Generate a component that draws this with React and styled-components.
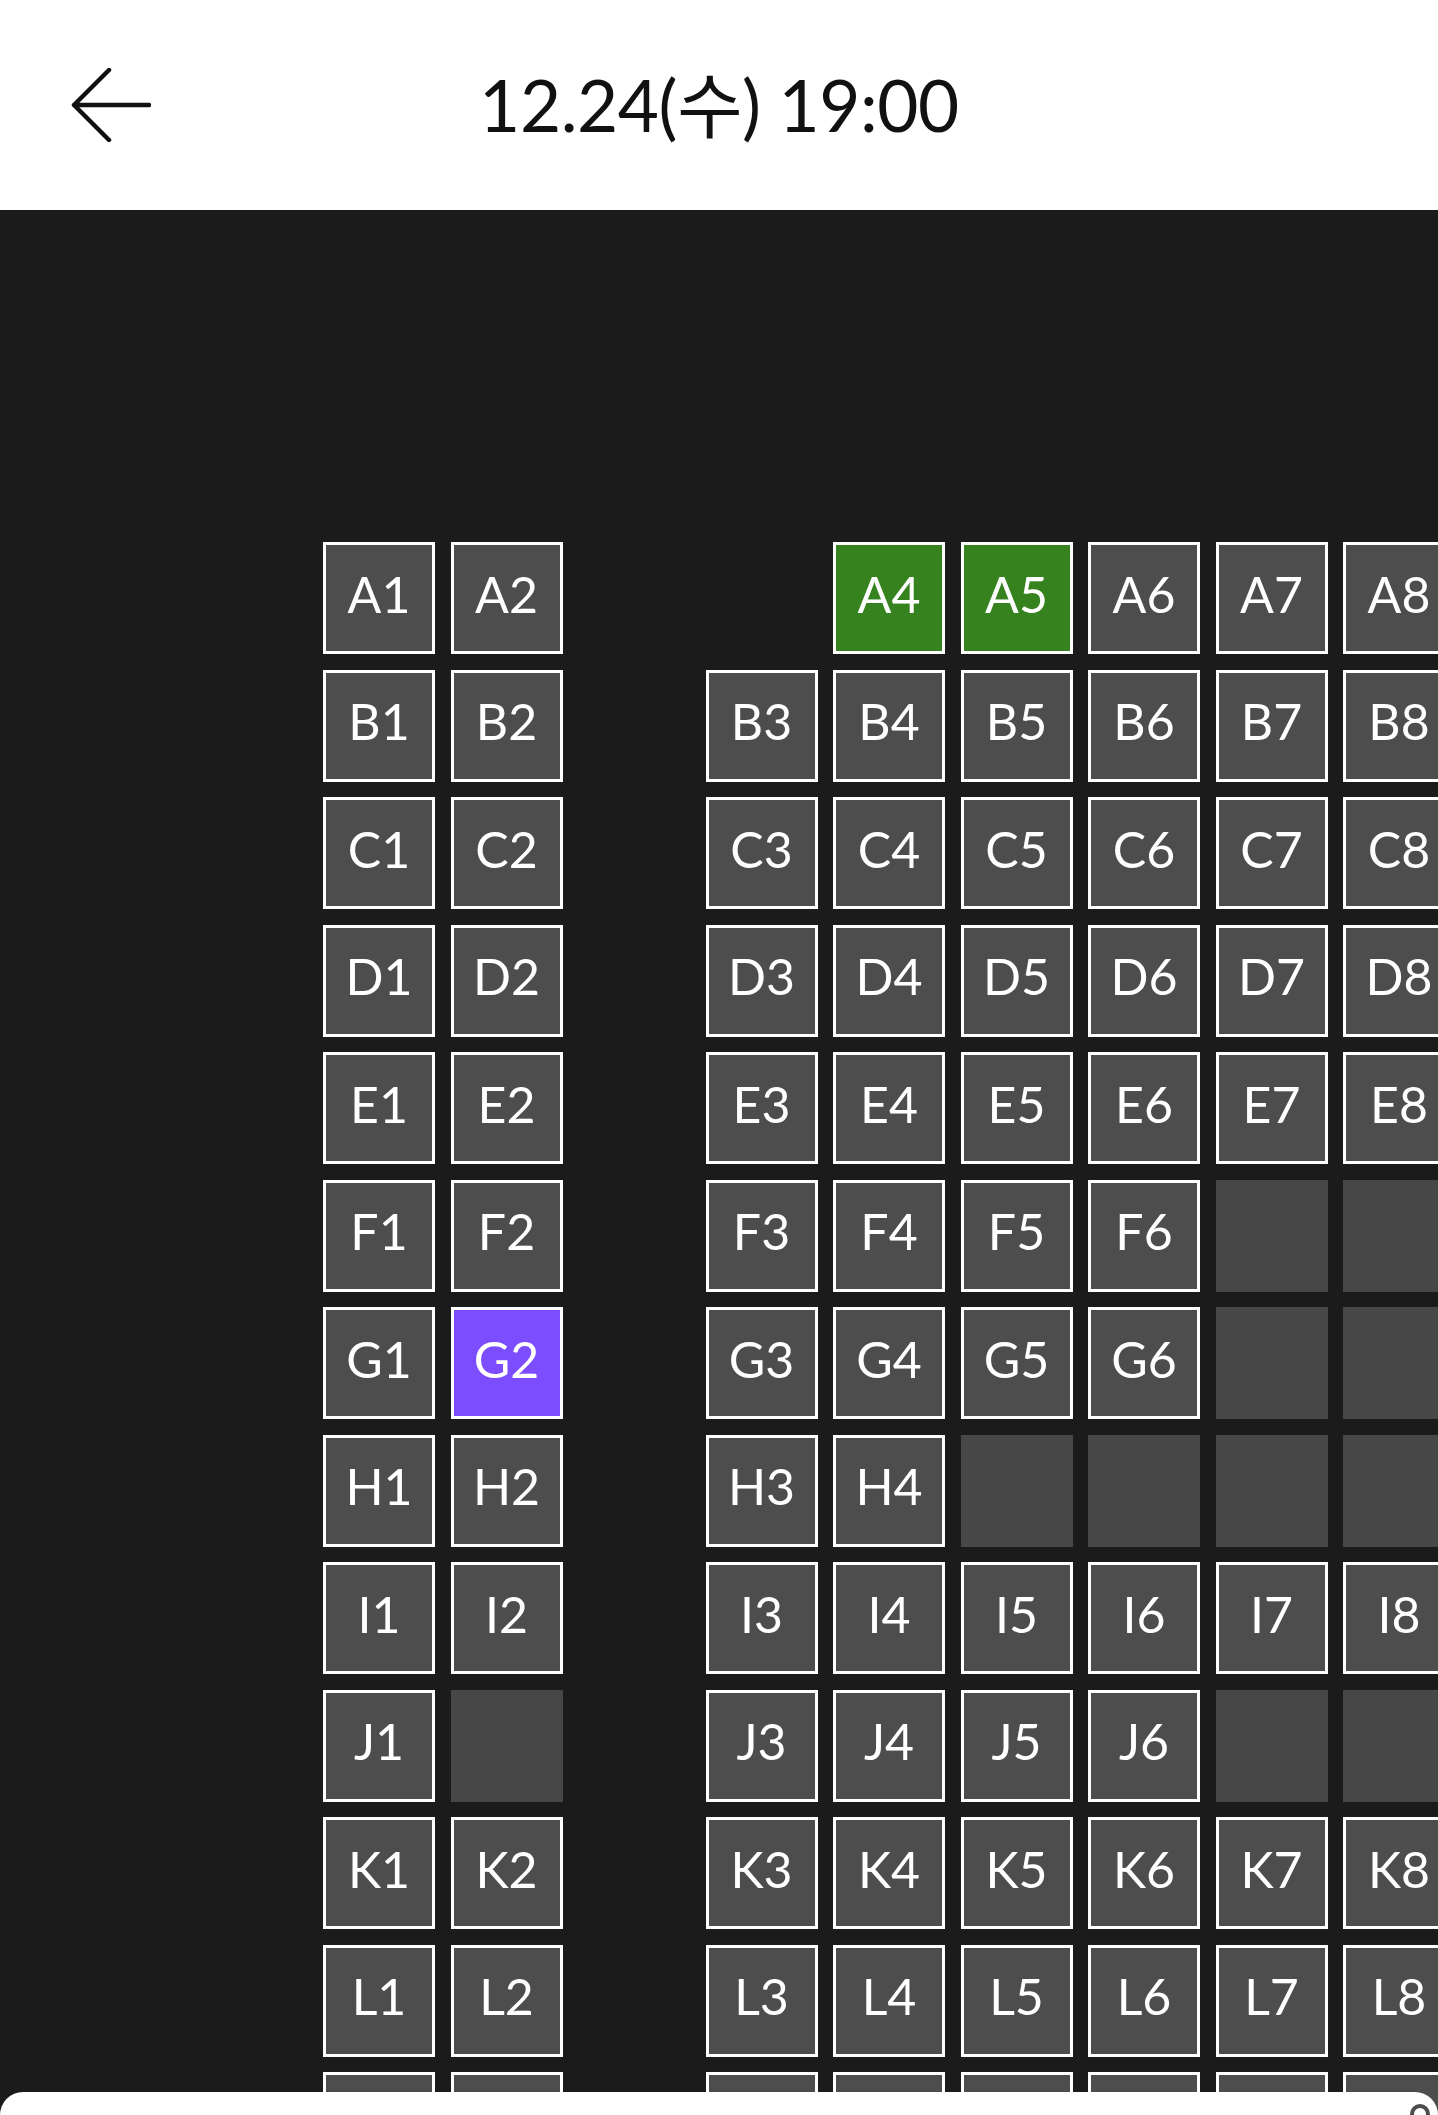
import React from "react";
import styled, { createGlobalStyle } from "styled-components";

const GlobalStyle = createGlobalStyle`
  html, body {
    margin: 0;
    padding: 0;
    background: #1b1b1b;
    overflow: hidden;
  }
  body {
    font-family: Lato, "Noto Sans CJK KR", sans-serif;
  }
`;

// seat states: n = normal, g = green (selected), p = purple (mine), d = disabled, x = no seat, _ = aisle
const layout = {
  A: "nn_xggnnn",
  B: "nn_nnnnnn",
  C: "nn_nnnnnn",
  D: "nn_nnnnnn",
  E: "nn_nnnnnn",
  F: "nn_nnnndd",
  G: "np_nnnndd",
  H: "nn_nndddd",
  I: "nn_nnnnnn",
  J: "nd_nnnndd",
  K: "nn_nnnnnn",
  L: "nn_nnnnnn",
  M: "nn_nnnnnn",
};

const App = () => {
  return (
    <Page>
      <GlobalStyle />
      <Header>
        <BackButton aria-label="back">
          <svg width="80" height="74" viewBox="0 0 80 74" fill="none">
            <path
              d="M38 2 L3 37 L38 72 M3 37 H78"
              stroke="#111"
              strokeWidth="4.5"
              strokeLinecap="round"
              strokeLinejoin="round"
            />
          </svg>
        </BackButton>
        <Title>12.24(수) 19:00</Title>
        <span />
      </Header>

      <SeatMap>
        <SeatGrid>
          {Object.entries(layout).map(([row, cells]) => {
            let num = 0;
            return cells.split("").map((c, i) => {
              if (c === "_") return <Aisle key={row + i} />;
              num += 1;
              const label = row + num;
              if (c === "x") return <Aisle key={label} />;
              if (c === "d") return <Seat key={label} $state="disabled" />;
              const state = c === "g" ? "green" : c === "p" ? "purple" : "normal";
              return (
                <Seat key={label} $state={state}>
                  {label}
                </Seat>
              );
            });
          })}
        </SeatGrid>
      </SeatMap>

      <Sheet>
        <SheetIcon>
          <svg width="24" height="24" viewBox="0 0 24 24" fill="none">
            <circle cx="12" cy="12" r="8" stroke="#4d4d4d" strokeWidth="4" />
          </svg>
        </SheetIcon>
      </Sheet>
    </Page>
  );
};

export default App;

const Page = styled.div`
  min-height: 100vh;
  background: #1b1b1b;
`;

const Header = styled.header`
  height: 210px;
  background: #ffffff;
  display: grid;
  grid-template-columns: 1fr auto 1fr;
  align-items: center;
`;

const BackButton = styled.button`
  justify-self: start;
  margin-left: 71px;
  padding: 0;
  border: none;
  background: none;
  display: flex;
  cursor: pointer;
`;

const Title = styled.h1`
  margin: 0 0 8px;
  font-family: Lato, "Noto Sans CJK KR", sans-serif;
  font-weight: 400;
  font-size: 71px;
  color: #111;
  letter-spacing: -0.4px;
  white-space: nowrap;
`;

const SeatMap = styled.main`
  padding: 332px 0 0 323px;
  overflow: hidden;
`;

const SeatGrid = styled.div`
  display: grid;
  grid-template-columns: repeat(9, 112px);
  grid-auto-rows: 112px;
  gap: 15.5px;
  width: max-content;
`;

const Aisle = styled.div``;

const fills = {
  normal: "#4d4d4d",
  green: "#36821e",
  purple: "#7c4dff",
  disabled: "#474747",
};

const Seat = styled.div`
  box-sizing: border-box;
  width: 112px;
  height: 112px;
  display: flex;
  align-items: center;
  justify-content: center;
  background: ${(p) => fills[p.$state]};
  border: ${(p) => (p.$state === "disabled" ? "none" : "3.5px solid #ffffff")};
  color: #ffffff;
  font-size: 50px;
  font-weight: 400;
  padding-bottom: 9px;
`;

const Sheet = styled.div`
  position: fixed;
  left: 0;
  right: 0;
  top: 2092px;
  bottom: 0;
  background: #ffffff;
  border-radius: 70px 70px 0 0;
`;

const SheetIcon = styled.div`
  position: absolute;
  top: 10px;
  right: 6px;
  display: flex;
`;
